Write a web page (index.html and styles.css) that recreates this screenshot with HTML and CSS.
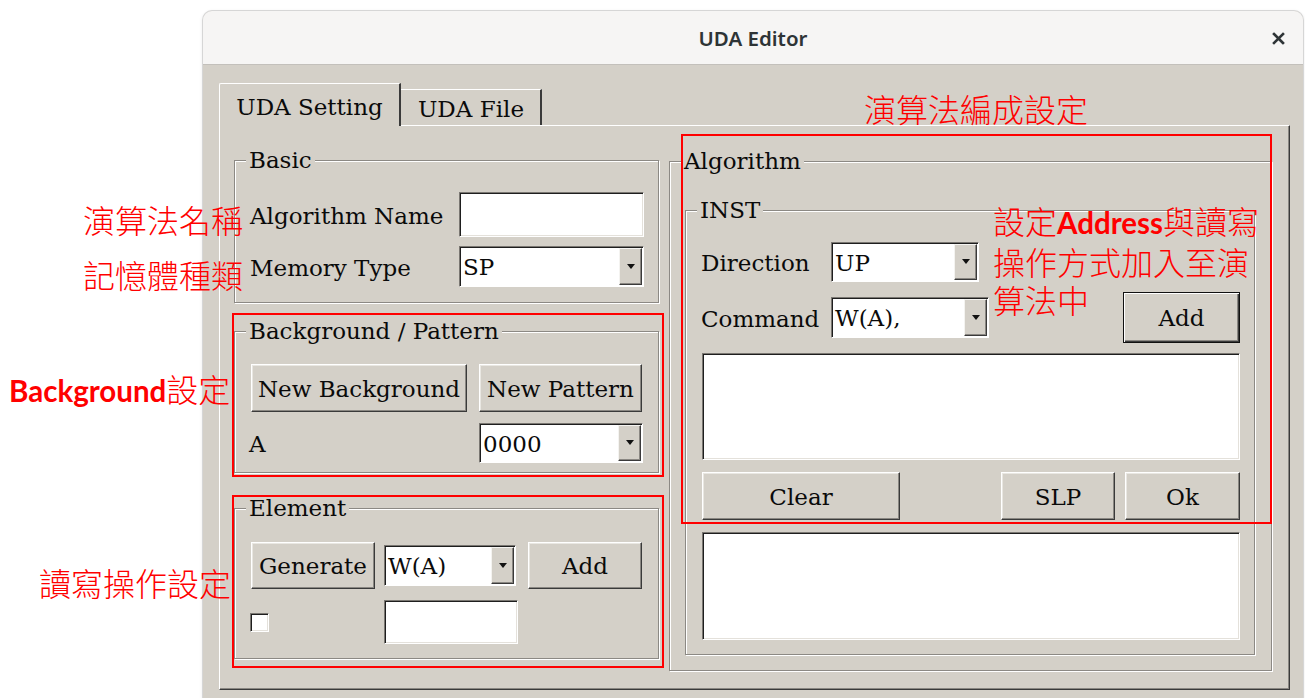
FILE: index.html
```html
<!DOCTYPE html>
<html lang="zh-Hant">
<head>
<meta charset="utf-8">
<title>UDA Editor</title>
<link rel="stylesheet" href="styles.css">
</head>
<body>
<div class="page">
  <div class="window">
    <header class="titlebar">
      <span></span>
      <h1 class="title">UDA Editor</h1>
      <span class="close">
        <svg width="13" height="13" viewBox="0 0 13 13"><path d="M2 2l9 9M11 2l-9 9" stroke="#2e3436" stroke-width="2.6" stroke-linecap="square"/></svg>
      </span>
    </header>

    <div class="client">
      <div class="tabs">
        <div class="tab active">UDA Setting</div>
        <div class="tab">UDA File</div>
      </div>

      <div class="panel">
        <div class="col">
          <section class="group basic">
            <div class="group-title">Basic</div>
            <div class="row name-row">
              <span class="label">Algorithm Name</span>
              <div class="field name-field"></div>
            </div>
            <div class="row mem-row">
              <span class="label">Memory Type</span>
              <div class="combo mem-combo"><span class="val">SP</span><span class="drop"></span></div>
            </div>
          </section>

          <section class="group bg">
            <div class="group-title">Background / Pattern</div>
            <div class="row bg-buttons">
              <button class="btn new-bg">New Background</button>
              <button class="btn new-pat">New Pattern</button>
            </div>
            <div class="row bg-a">
              <span class="label">A</span>
              <div class="combo a-combo"><span class="val">0000</span><span class="drop"></span></div>
            </div>
          </section>

          <section class="group elem">
            <div class="group-title">Element</div>
            <div class="row elem-top">
              <button class="btn gen">Generate</button>
              <div class="combo op-combo"><span class="val">W(A)</span><span class="drop"></span></div>
              <button class="btn elem-add">Add</button>
            </div>
            <div class="row elem-bottom">
              <span class="check"></span>
              <div class="field count-field"></div>
            </div>
          </section>
        </div>

        <div class="col right">
          <section class="group algo">
            <div class="group-title">Algorithm</div>
            <section class="group inst">
              <div class="group-title">INST</div>
              <div class="row dir-row">
                <span class="label key">Direction</span>
                <div class="combo dir-combo"><span class="val">UP</span><span class="drop"></span></div>
              </div>
              <div class="row cmd-row">
                <span class="label key">Command</span>
                <div class="combo cmd-combo"><span class="val">W(A),</span><span class="drop"></span></div>
                <button class="btn default inst-add">Add</button>
              </div>
              <div class="field list inst-list"></div>
              <div class="row actions">
                <button class="btn clear">Clear</button>
                <button class="btn slp">SLP</button>
                <button class="btn ok">Ok</button>
              </div>
              <div class="field list algo-list"></div>
            </section>
          </section>
        </div>
      </div>
    </div>
  </div>

  <!-- callouts drawn over the dialog -->
  <div class="note n-compose">演算法編成設定</div>
  <div class="note n-name">演算法名稱</div>
  <div class="note n-mem">記憶體種類</div>
  <div class="note n-bg"><span class="latin">Background</span>設定</div>
  <div class="note n-elem">讀寫操作設定</div>
  <div class="note n-inst">設定<span class="latin">Address</span>與讀寫<br>操作方式加入至演<br>算法中</div>

  <div class="frame f-bg"></div>
  <div class="frame f-elem"></div>
  <div class="frame f-algo"></div>
</div>
</body>
</html>
```

FILE: styles.css
```css
* { box-sizing: border-box; }

html, body {
  margin: 0;
  background: #ffffff;
}

.page {
  position: relative;
  width: 1305px;
  height: 698px;
  overflow: hidden;
  padding-top: 11px;
  font-family: "DejaVu Serif", serif;
  font-size: 23px;
  color: #0a0a0a;
}

/* ---------- window chrome ---------- */
.window {
  margin-left: 203px;
  width: 1100px;
  height: 700px;
  display: flex;
  flex-direction: column;
  background: #d4d0c8;
  border-radius: 9px 9px 0 0;
  box-shadow: 0 0 0 1px #d6d6d6, 0 1px 4px rgba(0, 0, 0, 0.12);
}

.titlebar {
  height: 54px;
  flex: none;
  display: grid;
  grid-template-columns: 1fr auto 1fr;
  align-items: center;
  background: #f6f5f4;
  border-bottom: 1px solid #c3c0bb;
  border-radius: 9px 9px 0 0;
}

.title {
  margin: 0;
  font-family: "Noto Sans", "DejaVu Sans", sans-serif;
  font-weight: 600;
  font-size: 20.5px;
  color: #2e3436;
  padding-top: 1px;
}

.close {
  justify-self: end;
  display: flex;
  padding-right: 18px;
  padding-top: 2px;
}

.client {
  flex: 1;
  padding: 18px 13px 0 16px;
}

/* ---------- notebook tabs ---------- */
.tabs {
  display: flex;
  align-items: flex-end;
  height: 42px;
}

.tab {
  height: 36px;
  width: 141px;
  background: #d4d0c8;
  border-top: 1px solid #ffffff;
  border-right: 2px solid #3a3a3a;
  text-align: center;
  line-height: 38px;
  padding-left: 1px;
}

.tab.active {
  position: relative;
  z-index: 1;
  width: 182px;
  height: 43px;
  margin-bottom: -1px;
  border-left: 1px solid #ffffff;
  border-top-left-radius: 2px;
  line-height: 46px;
  padding-left: 0;
  padding-bottom: 3px;
}

.panel {
  height: 565px;
  border: 1px solid;
  border-color: #ffffff #3a3a3a #3a3a3a #ffffff;
  box-shadow: inset -1px -1px 0 #8a8782;
  display: grid;
  grid-template-columns: 425px 603px;
  column-gap: 10px;
  align-items: start;
  padding: 34px 0 0 14px;
}

.col.right { margin-top: 1px; }

/* ---------- etched group boxes ---------- */
.group {
  --pad: 15px;
  padding-left: var(--pad);
  border: 1px solid #8c8984;
  box-shadow: 1px 1px 0 #ffffff, inset 1px 1px 0 #ffffff;
}

.group-title {
  display: table;
  margin: -16px 0 0 calc(11px - var(--pad));
  padding: 0 3px 0 3px;
  line-height: 30px;
  background: #d4d0c8;
}

.row {
  display: flex;
  align-items: center;
}

.label { padding-top: 2px; }

/* ---------- widgets ---------- */
.field {
  background: #ffffff;
  border: 1px solid;
  border-color: #7a7772 #ffffff #ffffff #7a7772;
  box-shadow: inset 1px 1px 0 #1e1e1e, inset -1px -1px 0 #e4e1db;
}

.combo {
  display: flex;
  background: #ffffff;
  border: 1px solid;
  border-color: #7a7772 #ffffff #ffffff #7a7772;
  box-shadow: inset 1px 1px 0 #1e1e1e;
  padding: 1px;
}

.combo .val {
  flex: 1;
  padding-left: 2px;
  display: flex;
  align-items: center;
  padding-top: 1px;
}

.combo .drop {
  width: 23px;
  flex: none;
  display: flex;
  align-items: center;
  justify-content: center;
  background: #d4d0c8;
  border: 1px solid;
  border-color: #f4f3f0 #3a3a3a #3a3a3a #f4f3f0;
  box-shadow: inset -1px -1px 0 #8a8782;
}

.combo .drop::after {
  content: "";
  border-left: 4px solid transparent;
  border-right: 4px solid transparent;
  border-top: 5px solid #111;
  margin-top: -1px;
}

.btn {
  font: inherit;
  color: inherit;
  background: #d4d0c8;
  border: 1px solid;
  border-color: #ffffff #3a3a3a #3a3a3a #ffffff;
  box-shadow: inset -1px -1px 0 #8a8782, inset 1px 1px 0 #e9e7e2;
  padding: 2px 0 0;
  line-height: 1;
}

.btn.default {
  border: 1px solid #111;
  box-shadow: inset 1px 1px 0 #ffffff, inset -1px -1px 0 #3a3a3a, inset -2px -2px 0 #8a8782;
}

.check {
  display: block;
  width: 19px;
  height: 19px;
  background: #ffffff;
  border: 1px solid;
  border-color: #7a7772 #ffffff #ffffff #7a7772;
  box-shadow: inset 1px 1px 0 #1e1e1e, inset -1px -1px 0 #e4e1db;
}

/* ---------- Basic ---------- */
.basic {
  height: 143px;
  padding-right: 14px;
}

.name-row { margin-top: 17px; height: 45px; }
.name-field { margin-left: auto; width: 185px; height: 45px; }
.mem-row { margin-top: 9px; height: 41px; }
.mem-combo { margin-left: auto; width: 185px; height: 41px; }

/* ---------- Background / Pattern ---------- */
.bg {
  --pad: 16px;
  height: 142px;
  margin-top: 28px;
  padding-right: 15px;
}

.bg-buttons { margin-top: 18px; height: 48px; }
.new-bg { width: 216px; height: 48px; }
.new-pat { width: 163px; height: 48px; margin-left: 12px; }
.bg-a { margin-top: 11px; height: 40px; }
.bg-a .label { margin-left: -2px; }
.a-combo { margin-left: auto; width: 164px; height: 40px; }

/* ---------- Element ---------- */
.elem {
  --pad: 16px;
  height: 151px;
  margin-top: 35px;
  padding-right: 15px;
}

.elem-top { margin-top: 19px; height: 47px; }
.gen { width: 124px; height: 47px; }
.op-combo { width: 132px; height: 41px; margin-left: 9px; }
.elem-add { width: 114px; height: 47px; margin-left: 12px; }
.elem-bottom { margin-top: 11px; height: 44px; }
.check { margin-left: -1px; }
.count-field { width: 134px; height: 44px; margin-left: 115px; }

/* ---------- Algorithm / INST ---------- */
.algo {
  height: 510px;
  padding-right: 16px;
}

.inst {
  --pad: 16px;
  height: 445px;
  margin-top: 34px;
  padding-right: 14px;
}

.key { width: 130px; flex: none; margin-left: -1px; }

.dir-row { margin-top: 17px; height: 40px; }
.dir-combo { width: 148px; height: 40px; }

.cmd-row { margin-top: 10px; height: 51px; }
.cmd-combo { width: 158px; height: 41px; }
.inst-add { margin-left: auto; width: 117px; height: 51px; }

.inst-list { margin-top: 10px; height: 107px; }

.actions { margin-top: 12px; height: 48px; }
.clear { width: 198px; height: 48px; }
.slp { width: 114px; height: 48px; margin-left: auto; }
.ok { width: 115px; height: 48px; margin-left: 10px; }

.algo-list { margin-top: 12px; height: 108px; }

/* ---------- red callouts ---------- */
.note {
  position: absolute;
  font-family: "Noto Sans CJK TC", "Noto Sans CJK SC", sans-serif;
  font-weight: 300;
  font-size: 32px;
  line-height: 38px;
  color: #ff0000;
  white-space: nowrap;
}

.note .latin {
  font-family: Lato, "Noto Sans", sans-serif;
  font-weight: 700;
  font-size: 29.5px;
}

.n-compose { left: 864px; top: 89px; }
.n-name { left: 83px; top: 200px; }
.n-mem { left: 83px; top: 255px; }
.n-bg { left: 9px; top: 369px; }
.n-elem { left: 39px; top: 563px; }
.n-inst { left: 993px; top: 201px; line-height: 38px; }

.frame {
  position: absolute;
  border: 2px solid #ff0000;
}

.f-bg { left: 232px; top: 313px; width: 432px; height: 164px; }
.f-elem { left: 232px; top: 495px; width: 432px; height: 173px; }
.f-algo { left: 681px; top: 134px; width: 591px; height: 390px; }
```
